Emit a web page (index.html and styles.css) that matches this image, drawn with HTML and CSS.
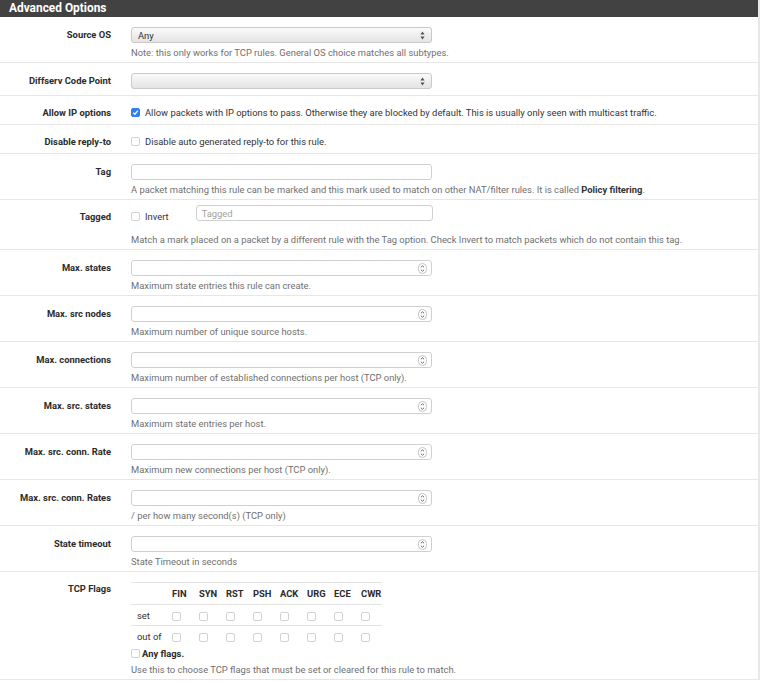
FILE: index.html
```html
<!DOCTYPE html>
<html>
<head>
<meta charset="utf-8">
<link rel="stylesheet" href="styles.css">
</head>
<body>
<div class="panel">
  <div class="panel-heading">Advanced Options</div>

  <div class="row">
    <div class="lbl">Source OS</div>
    <div class="ctl">
      <div class="select"><span>Any</span><svg class="arr" width="5" height="9" viewBox="0 0 5 9"><path d="M2.5 0.5L4.6 3.6H0.4z M2.5 8.5L0.4 5.4H4.6z" fill="#555"/></svg></div>
      <div class="help">Note: this only works for TCP rules. General OS choice matches all subtypes.</div>
    </div>
  </div>

  <div class="row row-plain">
    <div class="lbl">Diffserv Code Point</div>
    <div class="ctl">
      <div class="select"><span></span><svg class="arr" width="5" height="9" viewBox="0 0 5 9"><path d="M2.5 0.5L4.6 3.6H0.4z M2.5 8.5L0.4 5.4H4.6z" fill="#555"/></svg></div>
    </div>
  </div>

  <div class="row row-check">
    <div class="lbl lbl-check">Allow IP options</div>
    <div class="ctl">
      <div class="check-line"><span class="cb cb-on"><svg width="7" height="7" viewBox="0 0 7 7"><path d="M1.2 3.6L2.9 5.2 5.9 1.6" fill="none" stroke="#fff" stroke-width="1.3"/></svg></span><span>Allow packets with IP options to pass. Otherwise they are blocked by default. This is usually only seen with multicast traffic.</span></div>
    </div>
  </div>

  <div class="row row-check">
    <div class="lbl lbl-check">Disable reply-to</div>
    <div class="ctl">
      <div class="check-line"><span class="cb"></span><span>Disable auto generated reply-to for this rule.</span></div>
    </div>
  </div>

  <div class="row">
    <div class="lbl">Tag</div>
    <div class="ctl">
      <div class="input"></div>
      <div class="help">A packet matching this rule can be marked and this mark used to match on other NAT/filter rules. It is called <b>Policy filtering</b>.</div>
    </div>
  </div>

  <div class="row row-tagged">
    <div class="lbl lbl-tagged">Tagged</div>
    <div class="ctl">
      <div class="tagged-line">
        <div class="check-line invert"><span class="cb"></span><span>Invert</span></div>
        <div class="input input-tagged"><span class="ph">Tagged</span></div>
      </div>
      <div class="help help-tagged">Match a mark placed on a packet by a different rule with the Tag option. Check Invert to match packets which do not contain this tag.</div>
    </div>
  </div>

  <div class="row">
    <div class="lbl">Max. states</div>
    <div class="ctl">
      <div class="input num"><svg width="9" height="11" viewBox="0 0 9 11"><rect x="0.5" y="0.5" width="8" height="10" rx="4" fill="none" stroke="#c4c4c4"/><path d="M2.9 4.3L4.5 2.8 6.1 4.3M2.9 6.7L4.5 8.2 6.1 6.7" fill="none" stroke="#555" stroke-width="0.9"/></svg></div>
      <div class="help">Maximum state entries this rule can create.</div>
    </div>
  </div>

  <div class="row">
    <div class="lbl">Max. src nodes</div>
    <div class="ctl">
      <div class="input num"><svg width="9" height="11" viewBox="0 0 9 11"><rect x="0.5" y="0.5" width="8" height="10" rx="4" fill="none" stroke="#c4c4c4"/><path d="M2.9 4.3L4.5 2.8 6.1 4.3M2.9 6.7L4.5 8.2 6.1 6.7" fill="none" stroke="#555" stroke-width="0.9"/></svg></div>
      <div class="help">Maximum number of unique source hosts.</div>
    </div>
  </div>

  <div class="row">
    <div class="lbl">Max. connections</div>
    <div class="ctl">
      <div class="input num"><svg width="9" height="11" viewBox="0 0 9 11"><rect x="0.5" y="0.5" width="8" height="10" rx="4" fill="none" stroke="#c4c4c4"/><path d="M2.9 4.3L4.5 2.8 6.1 4.3M2.9 6.7L4.5 8.2 6.1 6.7" fill="none" stroke="#555" stroke-width="0.9"/></svg></div>
      <div class="help">Maximum number of established connections per host (TCP only).</div>
    </div>
  </div>

  <div class="row">
    <div class="lbl">Max. src. states</div>
    <div class="ctl">
      <div class="input num"><svg width="9" height="11" viewBox="0 0 9 11"><rect x="0.5" y="0.5" width="8" height="10" rx="4" fill="none" stroke="#c4c4c4"/><path d="M2.9 4.3L4.5 2.8 6.1 4.3M2.9 6.7L4.5 8.2 6.1 6.7" fill="none" stroke="#555" stroke-width="0.9"/></svg></div>
      <div class="help">Maximum state entries per host.</div>
    </div>
  </div>

  <div class="row">
    <div class="lbl">Max. src. conn. Rate</div>
    <div class="ctl">
      <div class="input num"><svg width="9" height="11" viewBox="0 0 9 11"><rect x="0.5" y="0.5" width="8" height="10" rx="4" fill="none" stroke="#c4c4c4"/><path d="M2.9 4.3L4.5 2.8 6.1 4.3M2.9 6.7L4.5 8.2 6.1 6.7" fill="none" stroke="#555" stroke-width="0.9"/></svg></div>
      <div class="help">Maximum new connections per host (TCP only).</div>
    </div>
  </div>

  <div class="row">
    <div class="lbl">Max. src. conn. Rates</div>
    <div class="ctl">
      <div class="input num"><svg width="9" height="11" viewBox="0 0 9 11"><rect x="0.5" y="0.5" width="8" height="10" rx="4" fill="none" stroke="#c4c4c4"/><path d="M2.9 4.3L4.5 2.8 6.1 4.3M2.9 6.7L4.5 8.2 6.1 6.7" fill="none" stroke="#555" stroke-width="0.9"/></svg></div>
      <div class="help">/ per how many second(s) (TCP only)</div>
    </div>
  </div>

  <div class="row">
    <div class="lbl">State timeout</div>
    <div class="ctl">
      <div class="input num"><svg width="9" height="11" viewBox="0 0 9 11"><rect x="0.5" y="0.5" width="8" height="10" rx="4" fill="none" stroke="#c4c4c4"/><path d="M2.9 4.3L4.5 2.8 6.1 4.3M2.9 6.7L4.5 8.2 6.1 6.7" fill="none" stroke="#555" stroke-width="0.9"/></svg></div>
      <div class="help">State Timeout in seconds</div>
    </div>
  </div>

  <div class="row row-flags">
    <div class="lbl lbl-check">TCP Flags</div>
    <div class="ctl">
      <table class="flags">
        <tr class="hd"><th></th><th>FIN</th><th>SYN</th><th>RST</th><th>PSH</th><th>ACK</th><th>URG</th><th>ECE</th><th>CWR</th></tr>
        <tr><td>set</td><td><span class="cb"></span></td><td><span class="cb"></span></td><td><span class="cb"></span></td><td><span class="cb"></span></td><td><span class="cb"></span></td><td><span class="cb"></span></td><td><span class="cb"></span></td><td><span class="cb"></span></td></tr>
        <tr><td>out of</td><td><span class="cb"></span></td><td><span class="cb"></span></td><td><span class="cb"></span></td><td><span class="cb"></span></td><td><span class="cb"></span></td><td><span class="cb"></span></td><td><span class="cb"></span></td><td><span class="cb"></span></td></tr>
      </table>
      <div class="check-line any"><span class="cb"></span><b>Any flags.</b></div>
      <div class="help">Use this to choose TCP flags that must be set or cleared for this rule to match.</div>
    </div>
  </div>
</div>
</body>
</html>
```

FILE: styles.css
```css
html, body {
  margin: 0;
  padding: 0;
  background: #fff;
}
body {
  font-family: Roboto, "Liberation Sans", sans-serif;
  font-size: 9.4px;
  color: #333;
}
.panel {
  width: 760px;
  box-sizing: border-box;
  border-right: 2px solid #e8e8e8;
}
.panel-heading {
  height: 17px;
  line-height: 17px;
  background: #424242;
  color: #fff;
  font-weight: 700;
  font-size: 11.9px;
  padding-left: 9px;
}
.row {
  display: grid;
  grid-template-columns: 111px 1fr;
  column-gap: 20px;
  padding: 10px 0 3px;
  border-bottom: 1px solid #e6e6e6;
}
.row-plain { padding-bottom: 6px; }
.row-check { padding-bottom: 5px; }
.row-tagged { padding-top: 5px; }
.row-flags { padding-bottom: 3px; }
.lbl {
  text-align: right;
  font-weight: 700;
  color: #2b2b2b;
  line-height: 16px;
  white-space: nowrap;
}
.lbl-check { line-height: 13px; }
.lbl-tagged { line-height: 13px; margin-top: 5px; }
.ctl {
  min-width: 0;
  line-height: 13px;
}
.select {
  width: 301px;
  height: 16px;
  box-sizing: border-box;
  border: 1px solid #c9c9c9;
  border-radius: 3px;
  background: linear-gradient(#fafafa, #e4e4e4);
  display: flex;
  align-items: center;
  justify-content: space-between;
  padding: 0 6px 0 6px;
  color: #333;
}
.input {
  width: 301px;
  height: 16px;
  box-sizing: border-box;
  border: 1px solid #d0d0d0;
  border-radius: 3px;
  background: #fff;
  display: flex;
  align-items: center;
  padding: 0 5px;
}
.num { justify-content: flex-end; padding-right: 4px; }
.input-tagged { width: 237px; }
.ph { color: #a0a0a0; }
.help {
  margin-top: 3px;
  color: #6f6f6f;
  white-space: nowrap;
}
.help b { color: #333; }
.help-tagged { margin-top: 10px; }
.check-line {
  display: flex;
  align-items: center;
  gap: 5px;
  white-space: nowrap;
  color: #333;
}
.cb {
  display: inline-flex;
  align-items: center;
  justify-content: center;
  width: 9px;
  height: 9px;
  box-sizing: border-box;
  border: 1px solid #d2d2d2;
  border-radius: 2px;
  background: #fff;
  flex: none;
}
.cb-on {
  background: #2f7ff0;
  border-color: #2f7ff0;
}
.tagged-line {
  display: flex;
  align-items: flex-start;
  gap: 27px;
}
.invert { margin-top: 5px; line-height: 13px; }
.flags {
  border-collapse: collapse;
  width: 251px;
  table-layout: fixed;
}
.flags th, .flags td {
  border-top: 1px solid #e3e3e3;
  text-align: left;
  padding: 0 0 0 6px;
  white-space: nowrap;
  width: 27px;
  box-sizing: border-box;
}
.flags th:first-child, .flags td:first-child { width: 35px; }
.flags th {
  height: 22px;
  font-weight: 700;
  color: #2b2b2b;
  vertical-align: middle;
}
.flags td {
  height: 21px;
  vertical-align: middle;
}
.flags td .cb { vertical-align: middle; }
.any { line-height: 13px; gap: 2px; }
.any b { color: #2b2b2b; }
```
